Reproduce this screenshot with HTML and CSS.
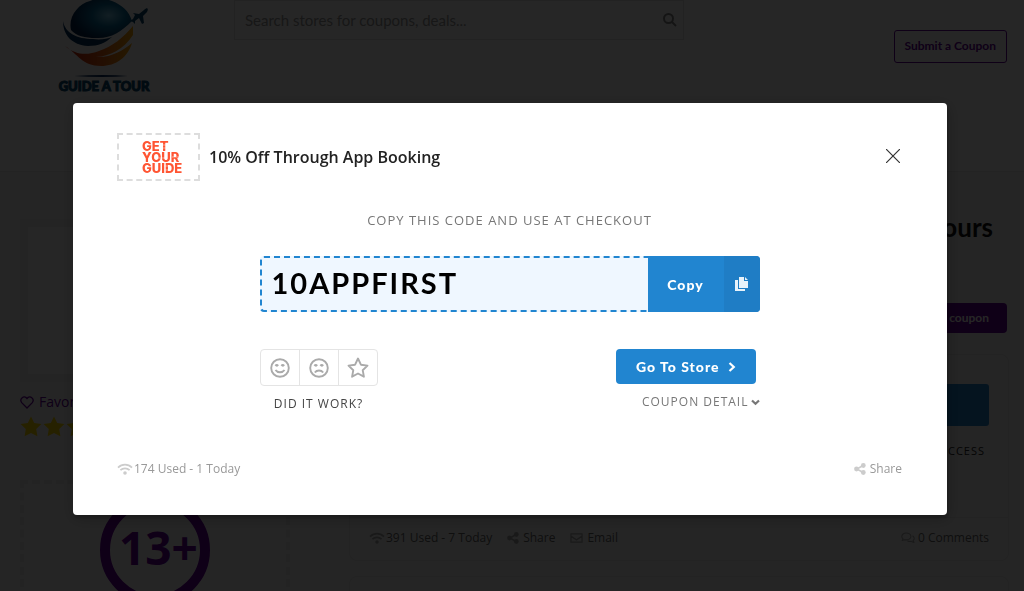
FILE: index.html
```
<!DOCTYPE html>
<html lang="en">
<head>
    <meta charset="UTF-8">
    <meta name="viewport" content="width=device-width, initial-scale=1">
    <title>10% Off Through App Booking</title>
    <link rel="stylesheet" href="styles.css">
</head>
<body>
    <!-- icons -->
    <svg class="sprite" width="0" height="0">
        <symbol id="wifi" viewBox="0 0 16 12">
            <path d="M1 4.6C5 .6 11 .6 15 4.6M3.4 7.2c2.6-2.5 6.6-2.5 9.2 0" fill="none" stroke="currentColor" stroke-width="1.7"/>
            <circle cx="8" cy="10" r="1.8" fill="currentColor"/>
        </symbol>
        <symbol id="share" viewBox="0 0 12 12">
            <path d="M9 2.5L3 6l6 3.5" fill="none" stroke="currentColor" stroke-width="1.5"/>
            <circle cx="9.3" cy="2.5" r="2.4" fill="currentColor"/>
            <circle cx="2.5" cy="6" r="2.4" fill="currentColor"/>
            <circle cx="9.3" cy="9.5" r="2.4" fill="currentColor"/>
        </symbol>
        <symbol id="mail" viewBox="0 0 14 12">
            <path d="M1 1.5h12v9H1zM1 4l6 4 6-4" fill="none" stroke="currentColor" stroke-width="1.4" stroke-linejoin="round"/>
        </symbol>
        <symbol id="comments" viewBox="0 0 14 12">
            <path d="M5.2 1C2.800 1 .8 2.400.8 4.500c0 1 .5 1.800 1.200 2.400L1.200 8.600l2.300-.9c4 .8 6.400-1.200 6.400-3.200C9.900 2.400 7.800 1 5.200 1zM11.500 3.800c2.200 1.300 2.200 3.600.6 4.700l.9 1.900-2.600-1c-1.500.3-3 .1-4-.7" fill="none" stroke="currentColor" stroke-width="1.100" stroke-linejoin="round"/>
        </symbol>
        <symbol id="star" viewBox="0 0 22 21">
            <path d="M11 .5l3.200 6.500 7.200 1-5.200 5.100 1.200 7.200-6.400-3.400-6.400 3.400 1.200-7.200L.6 8l7.200-1z" fill="currentColor"/>
        </symbol>
    </svg>

    <header class="header">
        <a class="brand" href="#">
            <svg width="100" height="98" viewBox="0 0 100 98" role="img" aria-label="Guide a Tour">
                <defs>
                    <radialGradient id="globe" cx=".62" cy=".45" r=".6">
                        <stop offset="0" stop-color="#78c8e8"/>
                        <stop offset=".45" stop-color="#0a6e9c"/>
                        <stop offset="1" stop-color="#04224c"/>
                    </radialGradient>
                    <linearGradient id="sunset" x1="0" x2="1">
                        <stop offset="0" stop-color="#c41808"/>
                        <stop offset=".5" stop-color="#e85a14"/>
                        <stop offset="1" stop-color="#f8a808"/>
                    </linearGradient>
                </defs>
                <path d="M17 30C14 17 24 4 36 1L46-3 58 1c10 4 17 10 20 20C67 32 56 39 42 38c-11 0-20-2-25-8z" fill="url(#globe)"/>
                <path d="M9 21c2 12 14 18 30 18 7 1 14 0 19-2-7 6-13 9-24 9C18 45 9 35 9 21z" fill="#04305e"/>
                <path d="M11 46c12 10 23 9 34 5 14-5 24-13 34-25v9C69 50 56 56 42 57c14 1 27-6 36-14-4 14-16 23-31 23-19 0-23-12-36-20z" fill="url(#sunset)"/>
                <path d="M79 13l6 1 5-4c3-3 5-2 3 2l-4 4 1 7-2 1-3-6-4 3v3l-2-2-3-1 3-2 2-4z" fill="#08466e"/>
                <path d="M20 76q30-2 54 0-25 2-54 0z" fill="#082c60"/>
                <text class="brand-text" x="50" y="91" text-anchor="middle">GUIDE A TOUR</text>
            </svg>
        </a>
        <form class="search">
            <input class="search-input" type="search" placeholder="Search stores for coupons, deals..." aria-label="Search stores">
            <svg width="14" height="14" viewBox="0 0 14 14"><path d="M9 9l4 4M10 5.500a4.500 4.500 0 1 1-9 0 4.500 4.500 0 0 1 9 0z" fill="none" stroke="currentColor" stroke-width="2"/></svg>
        </form>
        <a class="submit-link" href="#">Submit a Coupon</a>
    </header>

    <main class="page">
        <aside class="sidebar">
            <div class="store-thumb"></div>
            <a class="favorite" href="#">
                <svg width="14" height="13" viewBox="0 0 14 13"><path d="M7 12L1.700 6.700C-1 3 4-1.500 7 2.500c3-4 8 .5 5.300 4.200z" fill="none" stroke="currentColor" stroke-width="1.300"/></svg>
                Favorite This Store
            </a>
            <div class="stars">
                <svg width="22" height="21"><use href="#star"/></svg>
                <svg width="22" height="21"><use href="#star"/></svg>
                <svg width="22" height="21"><use href="#star"/></svg>
                <svg width="22" height="21"><use href="#star"/></svg>
                <svg width="22" height="21"><use href="#star"/></svg>
            </div>
            <div class="stats"><div class="ring">13+</div></div>
        </aside>
        <section class="content">
            <h1>Get Your Guide Tours</h1>
            <a class="add-coupon" href="#">Submit a coupon</a>
            <article class="card">
                <div class="card-body">
                    <span class="card-code"></span>
                    <span class="card-rate">100% SUCCESS</span>
                </div>
                <div class="card-footer">
                    <span class="meta"><svg width="16" height="12"><use href="#wifi"/></svg>391 Used - 7 Today</span>
                    <a class="meta wide" href="#"><svg width="12" height="12"><use href="#share"/></svg>Share</a>
                    <a class="meta wide" href="#"><svg width="13" height="12"><use href="#mail"/></svg>Email</a>
                    <a class="meta comments" href="#"><svg width="14" height="12"><use href="#comments"/></svg>0 Comments</a>
                </div>
            </article>
            <article class="card"><div class="card-body"></div></article>
        </section>
    </main>

    <!-- coupon modal -->
    <div class="overlay">
        <div class="modal" role="dialog" aria-modal="true" aria-labelledby="coupon-title">
            <div class="modal-header">
                <div class="store-logo">
                    <svg width="44" height="40" viewBox="0 -3 44 40">
                        <text x="0" y="11">GET</text>
                        <text x="0" y="22">YOUR</text>
                        <text x="0" y="33">GUIDE</text>
                        <path d="M18 5h8M18 8h8M12 18h13M30 17h9M22 26h6M22 30h6" stroke="#fff" stroke-width=".5"/>
                    </svg>
                </div>
                <h2 id="coupon-title">10% Off Through App Booking</h2>
                <button class="close" type="button" aria-label="Close">
                    <svg width="14" height="14" viewBox="0 0 14 14"><path d="M0 0l14 14M14 0L0 14" stroke="currentColor" stroke-width="1.200"/></svg>
                </button>
            </div>

            <p class="hint">COPY THIS CODE AND USE AT CHECKOUT</p>

            <div class="modal-body">
                <div class="code-row">
                    <input class="code" type="text" value="10APPFIRST" readonly aria-label="Coupon code">
                    <button class="copy" type="button">
                        <span class="copy-label">Copy</span>
                        <span class="copy-icon">
                            <svg width="14" height="15" viewBox="0 0 14 15"><path d="M4 0h5v4h4v7H4zM10 0l3 3h-3zM0 3h3v9h7v2H0z" fill="currentColor"/></svg>
                        </span>
                    </button>
                </div>
                <div class="actions">
                    <div class="votes">
                        <div class="vote-group">
                            <button type="button" aria-label="It worked">
                                <svg width="20" height="20" viewBox="0 0 20 20" fill="none" stroke="currentColor" stroke-width="1.900"><circle cx="10" cy="10" r="8.800"/><path d="M5.500 12c2 3 7 3 9 0"/><path d="M5.500 8q1.200-1.500 2.600 0M11.500 8q1.200-1.500 2.600 0" stroke-width="2.300"/></svg>
                            </button>
                            <button type="button" aria-label="It did not work">
                                <svg width="20" height="20" viewBox="0 0 20 20" fill="none" stroke="currentColor" stroke-width="1.900"><circle cx="10" cy="10" r="8.800"/><path d="M5.800 14.500c2-2.600 6.400-2.600 8.400 0"/><path d="M5.500 8q1.200-1.500 2.600 0M11.500 8q1.200-1.500 2.600 0" stroke-width="2.300"/></svg>
                            </button>
                            <button type="button" aria-label="Save coupon">
                                <svg width="22" height="21" viewBox="0 0 22 21"><path d="M11 1.500l2.900 6.200 6.600.9-4.800 4.600 1.200 6.500L11 16.500l-5.900 3.200 1.200-6.500L1.500 8.600l6.600-.9z" fill="none" stroke="currentColor" stroke-width="1.900" stroke-linejoin="round"/></svg>
                            </button>
                        </div>
                        <span class="votes-label">DID IT WORK?</span>
                    </div>
                    <div class="store-actions">
                        <a class="go-store" href="#">Go To Store
                            <svg width="8" height="10" viewBox="0 0 8 10"><path d="M1.500 1L5.800 5 1.500 9" fill="none" stroke="currentColor" stroke-width="2.200"/></svg>
                        </a>
                        <button class="detail" type="button">COUPON DETAIL
                            <svg width="9" height="7" viewBox="0 0 9 7"><path d="M1 1.500l3.500 3.300L8 1.500" fill="none" stroke="currentColor" stroke-width="2.200"/></svg>
                        </button>
                    </div>
                </div>
            </div>

            <div class="modal-footer">
                <span class="meta"><svg width="16" height="12"><use href="#wifi"/></svg>174 Used - 1 Today</span>
                <a class="meta wide" href="#"><svg width="12" height="12"><use href="#share"/></svg>Share</a>
            </div>
        </div>
    </div>
</body>
</html>
```
FILE: styles.css
```
* {
    box-sizing: border-box;
}
body {
    display: flex;
    flex-direction: column;
    margin: 0;
    height: 100vh;
    overflow: hidden;
    background: #f8f8f8;
    color: #666;
    font: 13px/20px "Open Sans", sans-serif;
}
a {
    color: inherit;
    text-decoration: none;
}
button {
    padding: 0;
    border: 0;
    background: none;
    color: inherit;
    font: inherit;
    cursor: pointer;
}
svg {
    flex: none;
}
h1, h2, p {
    margin: 0;
}
.sprite {
    position: absolute;
}

/* header */
.header {
    display: flex;
    flex: none;
    align-items: flex-start;
    height: 172px;
    padding: 0 17px 0 54px;
    background: #fff;
    border-bottom: 1px solid #e8e8e8;
}
.brand {
    display: flex;
}
.brand-text {
    fill: #0a4a72;
    stroke: #0a4a72;
    stroke-width: 1px;
    font: 900 13px Lato, sans-serif;
}
.search {
    display: flex;
    align-items: center;
    width: 450px;
    height: 40px;
    margin-left: 80px;
    padding-right: 6px;
    border: 1px solid #e0e0e0;
    color: #888;
}
.search-input {
    flex: 1;
    padding: 0 10px;
    border: 0;
    background: none;
    font: 15px Lato, sans-serif;
}
.search-input::placeholder {
    color: #999;
}
.submit-link {
    margin: 30px 0 0 auto;
    padding: 5px 10px 6px;
    border: 1px solid #609;
    border-radius: 3px;
    color: #609;
    font: bold 12px/20px Lato, sans-serif;
}

/* page behind the modal */
.page {
    display: grid;
    flex: 1;
    grid-template-columns: 270px 1fr;
    gap: 59px;
    min-height: 0;
    overflow: hidden;
    padding: 47px 15px 0 20px;
}
.store-thumb {
    width: 163px;
    height: 163px;
    border: 8px solid #eee;
    background: #fff;
}
.favorite {
    display: flex;
    align-items: center;
    gap: 5px;
    margin-top: 10px;
    color: #609;
    font-size: 14px;
}
.stars {
    display: flex;
    gap: 1px;
    margin-top: 4px;
    color: #fd0;
}
.stats {
    display: flex;
    justify-content: center;
    margin-top: 43px;
    padding: 11px 0 40px;
    border: 4px dashed #e8e8e8;
}
.ring {
    width: 110px;
    height: 110px;
    border: 10px solid #609;
    border-radius: 50%;
    color: #609;
    font-size: 46px;
    font-weight: bold;
    line-height: 84px;
    text-indent: 9px;
}
.content {
    display: flex;
    flex-direction: column;
}
h1 {
    padding-right: 16px;
    color: #111;
    font: bold 26px/16px Lato, sans-serif;
    text-align: right;
}
.add-coupon {
    align-self: flex-end;
    margin: 68px 2px 21px;
    padding: 5px 18px;
    border-radius: 4px;
    background: #609;
    color: #fff;
    font: bold 12px/20px Lato, sans-serif;
}
.card {
    margin-bottom: 15px;
    border: 1px solid #e8e8e8;
    border-radius: 8px;
}
.card-body {
    display: flex;
    flex-direction: column;
    align-items: flex-end;
    min-height: 162px;
    padding: 29px 19px;
}
.card-code {
    width: 110px;
    height: 42px;
    border-radius: 3px;
    background: #2185d0;
}
.card-rate {
    margin: 15px 4px;
    color: #222;
    font-size: 11px;
    letter-spacing: 1px;
}
.card-footer {
    display: flex;
    gap: 15px;
    padding: 10px 19px 12px;
    border-top: 1px solid #e8e8e8;
}
.meta {
    display: flex;
    align-items: center;
    gap: 1px;
    font-size: 12px;
}
.wide {
    gap: 4px;
}
.comments {
    gap: 3px;
    margin-left: auto;
}
.card-footer svg {
    color: #aaa;
}

/* coupon modal */
.overlay {
    position: fixed;
    inset: 0;
    padding: 103px 77px 20px 73px;
    background: rgba(0, 0, 0, .85);
}
.modal {
    padding: 30px 45px 36px 44px;
    border-radius: 4px;
    background: #fff;
    box-shadow: 1px 3px 3px rgba(0, 0, 0, .2), 1px 3px 15px 2px rgba(0, 0, 0, .2);
}
.modal-header {
    display: flex;
    align-items: center;
}
.store-logo {
    width: 83px;
    height: 48px;
    padding: 2px 0 0 23px;
    border: 2px dashed #ddd;
}
.store-logo text {
    fill: #ff5533;
    font: 800 13px Inter, sans-serif;
}
h2 {
    margin-left: 9px;
    color: #222;
    font-size: 16px;
    font-weight: 600;
    line-height: 24px;
}
.close {
    display: flex;
    margin: 0 2px 2px auto;
    color: #333;
}
.hint {
    margin: 29px 0 26px;
    color: #777;
    letter-spacing: 1px;
    text-align: center;
}
.modal-body {
    max-width: 500px;
    margin: 0 auto;
}
.code-row {
    display: flex;
    height: 56px;
}
.code {
    flex: 1;
    min-width: 0;
    padding: 0 10px 3px;
    border: 2px dashed #2185d0;
    border-right: 0;
    border-radius: 4px 0 0 4px;
    background: #eff7ff;
    color: #000;
    font: bold 29px Lato, sans-serif;
    letter-spacing: 2px;
}
.copy {
    display: flex;
    width: 112px;
    overflow: hidden;
    border-radius: 0 4px 4px 0;
    background: #2185d0;
    color: #fff;
    font: 900 14px/58px Lato, sans-serif;
    letter-spacing: 1px;
}
.copy-label {
    flex: 1;
}
.copy-icon {
    display: flex;
    align-items: center;
    justify-content: center;
    width: 36px;
    height: 56px;
    background: #1f7dc5;
    color: #e8f2fa;
}
.actions {
    display: flex;
    justify-content: space-between;
    margin-top: 37px;
}
.votes, .store-actions {
    display: flex;
    flex-direction: column;
}
.votes {
    align-items: center;
}
.store-actions {
    align-items: flex-end;
}
.vote-group {
    display: flex;
    border: 1px solid #e4e4e4;
    border-radius: 4px;
    color: #aaa;
}
.vote-group button {
    display: flex;
    box-sizing: content-box;
    align-items: center;
    justify-content: center;
    width: 38px;
    height: 35px;
}
.vote-group button + button {
    border-left: 1px solid #e4e4e4;
}
.votes-label {
    margin-top: 8px;
    color: #444;
    font-size: 12px;
    letter-spacing: 1px;
}
.go-store {
    display: flex;
    align-items: center;
    gap: 8px;
    margin-right: 4px;
    padding: 0 20px;
    border-radius: 4px;
    background: #2185d0;
    color: #fff;
    font: 900 14px/35px Lato, sans-serif;
    letter-spacing: 1px;
}
.detail {
    display: flex;
    align-items: center;
    gap: 2px;
    margin-top: 8px;
    color: #777;
    font-size: 12px;
    letter-spacing: 1px;
}
.modal-footer {
    display: flex;
    justify-content: space-between;
    margin-top: 45px;
    color: #999;
}
.modal-footer svg {
    color: #ccc;
}
```
